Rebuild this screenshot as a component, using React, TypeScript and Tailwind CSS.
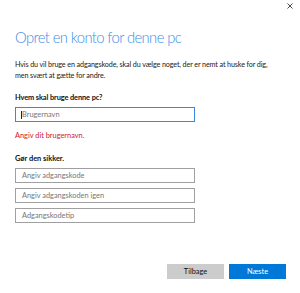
export default function App() {
  const font = { fontFamily: 'Lato, "Noto Sans", sans-serif' };

  return (
    <div className="relative w-[300px] h-[293px] bg-white overflow-hidden flex flex-col" style={font}>
      {/* luk-knap */}
      <svg className="absolute top-[3px] right-[7px]" width="6" height="6" viewBox="0 0 6 6">
        <path d="M0.5 0.5 L5.5 5.5 M5.5 0.5 L0.5 5.5" stroke="#333" strokeWidth="0.9" />
      </svg>

      <div className="flex flex-col px-[15px] pt-[27px]">
        <h1 className="text-[14.8px] leading-[20px] font-light text-[#3a8ee6] whitespace-nowrap tracking-[-0.6px]">
          Opret en konto for denne pc
        </h1>

        <p className="mt-[12px] text-[7.2px] leading-[11px] text-[#222] whitespace-nowrap tracking-[-0.12px]">
          Hvis du vil bruge en adgangskode, skal du vælge noget, der er nemt at huske for dig,
          <br />
          men svært at gætte for andre.
        </p>

        <div className="mt-[11px] text-[7.4px] leading-[11px] font-bold text-[#111] tracking-[-0.1px]">
          Hvem skal bruge denne pc?
        </div>

        <div className="mt-[4px] w-[180px] h-[15px] border border-[#3b87e0] flex items-center pl-[5px]">
          <span className="w-px h-[8px] bg-[#222]" />
          <span className="text-[7.4px] text-[#777]">Brugernavn</span>
        </div>

        <div className="mt-[8px] text-[7.4px] leading-[11px] text-[#d0202a]">Angiv dit brugernavn.</div>

        <div className="mt-[12px] text-[7.4px] leading-[11px] font-bold text-[#111]">Gør den sikker.</div>

        <div className="mt-[4px] flex flex-col gap-[5px]">
          {['Angiv adgangskode', 'Angiv adgangskoden igen', 'Adgangskodetip'].map((p) => (
            <div key={p} className="w-[180px] h-[15px] border border-[#a0a0a0] flex items-center pl-[6px]">
              <span className="text-[7.4px] text-[#777]">{p}</span>
            </div>
          ))}
        </div>
      </div>

      <div className="mt-[41px] flex justify-end gap-[5px] pr-[14px]">
        <button className="w-[57px] h-[15px] bg-[#cccccc] text-[7.4px] text-[#111] flex items-center justify-center">
          Tilbage
        </button>
        <button className="w-[57px] h-[15px] bg-[#0078d7] text-[7.4px] text-white flex items-center justify-center">
          Næste
        </button>
      </div>
    </div>
  );
}
